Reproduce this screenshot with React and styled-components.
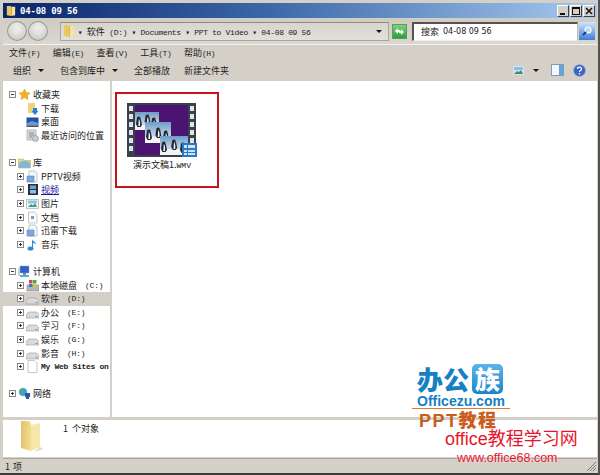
import styled, { createGlobalStyle } from "styled-components";

const GlobalStyle = createGlobalStyle`
  html, body {
    margin: 0;
    padding: 0;
    background: #d4d0c8;
  }
  * {
    box-sizing: border-box;
  }
`;

const CJK = `"Noto Sans CJK SC", "Liberation Sans", sans-serif`;
const MONO = `"Liberation Mono", "Noto Sans CJK SC", monospace`;

const Window = styled.div`
  position: relative;
  width: 600px;
  height: 475px;
  display: flex;
  flex-direction: column;
  padding: 3px 1px 0 3px;
  background: #d4d0c8;
  border-right: 2px solid #55534f;
  border-bottom: 2px solid #3c3b38;
  overflow: hidden;
  font-family: ${CJK};
  font-size: 9px;
  color: #222;
`;

const TitleBar = styled.div`
  height: 15px;
  flex: none;
  display: flex;
  align-items: center;
  gap: 3px;
  padding: 0 2px;
  background: linear-gradient(90deg, #0a246a 0%, #3d68a8 45%, #a6caf0 100%);
`;

const TitleText = styled.span`
  flex: 1;
  font: bold 9px "DejaVu Sans Mono", monospace;
  letter-spacing: -0.2px;
  color: #fff;
`;

const WinButton = styled.div`
  width: 12px;
  height: 12px;
  background: #d4d0c8;
  border: 1px solid;
  border-color: #fff #404040 #404040 #fff;
  display: flex;
  align-items: center;
  justify-content: center;
`;

const WinButtons = styled.div`
  display: flex;
  gap: 1px;
`;

const NavBar = styled.div`
  height: 26px;
  flex: none;
  margin-top: 1px;
  display: flex;
  align-items: center;
  padding: 0 2px 1px 4px;
  background: linear-gradient(#cfccc4, #dad7d0);
  border-bottom: 1px solid #f2f1ee;
`;

const RoundButton = styled.div`
  width: 20px;
  height: 20px;
  margin-right: 1px;
  border-radius: 50%;
  border: 1px solid #999996;
  background: radial-gradient(circle at 50% 35%, #f2f2f0, #cfcfcb 70%, #b4b4b0);
  display: flex;
  align-items: center;
  justify-content: center;
`;

const AddressBar = styled.div`
  width: 331px;
  height: 19px;
  margin-left: 11px;
  display: flex;
  align-items: center;
  padding: 0 6px 0 1px;
  background: linear-gradient(#d8d5ce, #e2e0da);
  border: 1px solid #a9a69f;
  border-top-color: #8f8c85;
`;

const Crumbs = styled.span`
  flex: 1;
  margin-left: 2px;
  white-space: nowrap;
  font: 8px ${MONO};
  letter-spacing: -0.33px;
  color: #222;
`;

const CrumbCjk = styled.span`
  font: 9px ${CJK};
  letter-spacing: 0;
`;

const GoButton = styled.div`
  width: 15px;
  height: 15px;
  margin-left: 3px;
  background: linear-gradient(#7ed27a, #2f9e3a);
  border: 1px solid #5f9a5c;
  display: flex;
  align-items: center;
  justify-content: center;
`;

const SearchBox = styled.div`
  width: 167px;
  height: 19px;
  margin-left: 5px;
  display: flex;
  align-items: center;
  padding-left: 7px;
  gap: 4px;
  background: #fff;
  border-top: 2px solid #55534f;
  border-left: 2px solid #55534f;
  border-right: 1px solid #c0bdb6;
  border-bottom: 1px solid #f0efec;
  font-size: 9px;
`;

const SearchMono = styled.span`
  font: 8px "DejaVu Sans", sans-serif;
`;

const SearchButton = styled.div`
  width: 16px;
  height: 18px;
  margin-left: 1px;
  background: linear-gradient(#d4e4fa, #3d7fd8);
  display: flex;
  align-items: center;
  justify-content: center;
`;

const MenuBar = styled.div`
  height: 17px;
  flex: none;
  display: flex;
  align-items: center;
  gap: 12.5px;
  padding-left: 6px;
  padding-bottom: 2px;
`;

const MenuItem = styled.span`
  font-size: 9px;
  white-space: nowrap;
`;

const MenuKey = styled.span`
  font: 8px ${MONO};
  letter-spacing: -0.4px;
`;

const Toolbar = styled.div`
  height: 18px;
  flex: none;
  display: flex;
  align-items: center;
  padding: 0 11px 2px 10px;
`;

const ToolButton = styled.span`
  display: flex;
  align-items: center;
  gap: 7px;
  margin-right: ${(p) => p.$gap}px;
  font-size: 9px;
  white-space: nowrap;
`;

const Caret = styled.i`
  display: block;
  width: 0;
  height: 0;
  border-left: 3px solid transparent;
  border-right: 3px solid transparent;
  border-top: 3px solid #111;
`;

const ViewCaret = styled(Caret)`
  margin-right: 3px;
`;

const ToolIcons = styled.div`
  margin-left: auto;
  display: flex;
  align-items: center;
  gap: 9px;
`;

const Split = styled.div`
  height: 336px;
  flex: none;
  margin-top: 1px;
  display: flex;
`;

const Sidebar = styled.nav`
  width: 107px;
  flex: none;
  padding-top: 7px;
  background: #fff;
  overflow: hidden;
`;

const Content = styled.main`
  flex: 1;
  margin-left: 2px;
  padding: 11px 0 0 3px;
  background: #fff;
`;

const TreeGroup = styled.div`
  margin-bottom: 13.6px;
`;

const Row = styled.div`
  height: 13.6px;
  display: flex;
  align-items: center;
  padding-left: ${(p) => (p.$child ? 14 : 6)}px;
  background: ${(p) => (p.$selected ? "#d4d0c8" : "transparent")};
  white-space: nowrap;
`;

const Expander = styled.span`
  position: relative;
  width: 7px;
  height: 7px;
  flex: none;
  border: 1px solid #8a8a8a;
  background: #fff;
  &::before {
    content: "";
    position: absolute;
    left: 1px;
    right: 1px;
    top: 2px;
    height: 1px;
    background: #333;
  }
  &::after {
    content: "";
    display: ${(p) => (p.$open ? "none" : "block")};
    position: absolute;
    top: 1px;
    bottom: 1px;
    left: 2px;
    width: 1px;
    background: #333;
  }
`;

const ExpanderGap = styled.span`
  width: 7px;
  flex: none;
`;

const RowIcon = styled.span`
  width: 13px;
  height: 13px;
  flex: none;
  margin: 0 2px 0 2px;
  display: flex;
  align-items: center;
  justify-content: center;
`;

const RowLabel = styled.span`
  font: ${(p) => (p.$mono ? `bold 8px ${MONO}` : `9px ${CJK}`)};
  color: ${(p) => (p.$link ? "#1c1c9c" : "#222")};
  text-decoration: ${(p) => (p.$link ? "underline" : "none")};
  letter-spacing: ${(p) => (p.$mono ? "-0.3px" : "0")};
`;

const Drive = styled.span`
  font: 8px ${MONO};
  margin-left: 8px;
  letter-spacing: -0.2px;
`;

const SelectBox = styled.div`
  width: 104px;
  height: 96px;
  border: 2px solid #c8141e;
  display: flex;
  flex-direction: column;
  align-items: center;
  padding: 9px 10px 0 0;
`;

const FileName = styled.span`
  margin-top: 1px;
  font-size: 9px;
  line-height: 13px;
  color: #222;
  white-space: nowrap;
`;

const FileExt = styled.span`
  font: 8px ${MONO};
`;

const Details = styled.div`
  height: 37px;
  flex: none;
  margin-top: 3px;
  display: flex;
  background: #fff;
  padding-left: 15px;
`;

const DetailsText = styled.span`
  margin-left: 19px;
  padding-top: 2px;
  font-size: 9px;
  word-spacing: 2px;
`;

const StatusBar = styled.div`
  height: 15px;
  flex: none;
  margin-top: 1px;
  display: flex;
  align-items: center;
  padding-left: 2px;
  background: #d4d0c8;
  border-top: 1px solid #a9a69f;
  font-size: 9px;
  word-spacing: 1px;
`;

const Grip = styled.svg`
  position: absolute;
  right: 1px;
  bottom: 1px;
`;

// Site stamp laid over the lower-right corner of the window
const Stamp = styled.div`
  position: absolute;
  left: 412px;
  top: 364px;
  width: 180px;
  pointer-events: none;
`;

const LogoRow = styled.div`
  height: 30px;
  display: flex;
  align-items: center;
  padding-left: 5px;
  gap: 3px;
  font: 900 26px/30px ${CJK};
  color: #1680c4;
`;

const LogoBadge = styled.span`
  width: 31px;
  height: 30px;
  border-radius: 5px;
  background: linear-gradient(#5cb4ea, #1b84cc);
  color: #fff;
  font-size: 25px;
  line-height: 29px;
  text-align: center;
`;

const LogoDomain = styled.div`
  width: 98px;
  height: 15px;
  padding-left: 5px;
  border-bottom: 1px solid #e07a28;
  font: bold 14px/14px "Liberation Sans", sans-serif;
  color: #1680c4;
`;

const LogoCourse = styled.div`
  height: 21px;
  padding: 3px 0 0 7px;
  font: 900 18px/18px "Liberation Sans", ${CJK};
  color: #cc5c1c;
  letter-spacing: 1.5px;
`;

const StampTitle = styled.div`
  position: absolute;
  left: 33px;
  top: 66px;
  font: 18px/18px "Liberation Sans", ${CJK};
  color: #e8142c;
  white-space: nowrap;
  text-shadow: 0 0 2px #fff;
`;

const StampUrl = styled.div`
  position: absolute;
  left: 45px;
  top: 87px;
  font: 12.5px/15px "Liberation Sans", sans-serif;
  color: #e8142c;
  white-space: nowrap;
  text-shadow: 0 0 2px #fff;
`;

const Folder = ({ size = 13 }) => (
  <svg width={size} height={size} viewBox="0 0 13 13">
    <path d="M2 1h4l1 1v10l-5-1z" fill="#e8c860" />
    <path d="M7 2h4v9l-4 1z" fill="#f6e4a0" />
    <path d="M7 2v10" stroke="#caa544" strokeWidth="0.6" />
  </svg>
);

const treeIcons = {
  star: (
    <path
      d="M6.5 1l1.7 3.6 3.8.4-2.8 2.6.8 3.9-3.5-2-3.5 2 .8-3.9L1 5l3.8-.4z"
      fill="#f5b21e"
      stroke="#d98a12"
      strokeWidth="0.5"
    />
  ),
  download: (
    <>
      <path d="M2 1h7v10H2z" fill="#efd477" />
      <path d="M7 6h4v3h1.5L9 13 5.5 9H7z" fill="#2f7fcc" />
    </>
  ),
  desktop: (
    <>
      <rect x="0.5" y="2.5" width="12" height="8" fill="#2450a8" />
      <path d="M1 8l5-2 6 2v2H1z" fill="#6a96dc" />
      <rect x="0.5" y="10.5" width="12" height="1.5" fill="#555" />
    </>
  ),
  recent: (
    <>
      <rect x="1" y="1" width="9" height="10" fill="#d8d8d8" stroke="#999" strokeWidth="0.6" />
      <path d="M3 4h5M3 6h5M3 8h3" stroke="#888" />
      <circle cx="9.5" cy="9.5" r="3" fill="#c4ccd4" stroke="#889" strokeWidth="0.6" />
    </>
  ),
  library: (
    <>
      <path d="M0.5 3h5l1 1.5h6V12H0.5z" fill="#f0d880" stroke="#b89c48" strokeWidth="0.5" />
      <path d="M1 7c3-3 8-3 11 0v5H1z" fill="#7fb8d8" />
    </>
  ),
  doc: (
    <>
      <path d="M3 1h6l2 2v9H3z" fill="#f4f6fa" stroke="#a0a8b4" strokeWidth="0.6" />
      <rect x="1" y="6" width="7" height="6" fill="#7fa8dc" stroke="#4c78b4" strokeWidth="0.5" />
    </>
  ),
  film: (
    <>
      <rect x="2" y="1" width="10" height="11" fill="#2c3038" />
      <rect x="4" y="2.5" width="6" height="3.5" fill="#6aa4d4" />
      <rect x="4" y="7" width="6" height="3.5" fill="#8cc0e4" />
    </>
  ),
  picture: (
    <>
      <rect x="0.5" y="2.5" width="12" height="9" fill="#eef4f6" stroke="#8aa" strokeWidth="0.6" />
      <path d="M2 10l3-3 2 1.5L9 6l2 4z" fill="#3c9c7c" />
      <rect x="2" y="3.5" width="9" height="3" fill="#8cc4e8" />
    </>
  ),
  page: (
    <>
      <path d="M2.5 1h6l2.5 2.5V12H2.5z" fill="#fafafa" stroke="#a4a8b0" strokeWidth="0.6" />
      <rect x="5" y="5" width="3" height="3" fill="#7c9cc4" />
    </>
  ),
  music: (
    <>
      <path d="M6 1.5c1 2 4 2.5 4.5 5C9.5 5.5 8 5 7 5v6H6z" fill="#2f88d8" />
      <ellipse cx="4.5" cy="10.5" rx="3" ry="2" fill="#2f88d8" />
    </>
  ),
  computer: (
    <>
      <rect x="2" y="1" width="9" height="7" fill="#2c62c4" stroke="#8aa" strokeWidth="0.5" />
      <rect x="5" y="8" width="3" height="2" fill="#889" />
      <rect x="2" y="10" width="9" height="2" fill="#50b0d8" />
      <rect x="0" y="3" width="2" height="8" fill="#c8d0d8" />
    </>
  ),
  system: (
    <>
      <rect x="1" y="6" width="12" height="6" fill="#b4b8bc" stroke="#777" strokeWidth="0.5" />
      <path d="M3 1h3.5v3.5H3z" fill="#d84c2c" />
      <path d="M7 1h3.5v3.5H7z" fill="#4ca83c" />
      <path d="M3 5h3.5v3H3z" fill="#2c7cd8" />
      <path d="M7 5h3.5v3H7z" fill="#e8c42c" />
    </>
  ),
  drive: (
    <>
      <path d="M2.5 6h8L13 9v3H0V9z" fill="#d8dadc" stroke="#888" strokeWidth="0.5" />
      <rect x="9.5" y="10" width="2" height="1" fill="#4a8" />
    </>
  ),
  blank: <path d="M2 0.5h6.5L11 3v9.5H2z" fill="#fff" stroke="#b0b0b0" strokeWidth="0.7" />,
  network: (
    <>
      <circle cx="5" cy="5" r="4" fill="#3aa0d0" />
      <path d="M2 3l3 1 1 3-3 0z" fill="#4cb050" />
      <rect x="7" y="6" width="5" height="4" fill="#2456b8" />
      <rect x="8" y="10" width="3" height="2" fill="#456" />
    </>
  ),
};

const TreeIcon = ({ name }) => (
  <RowIcon>
    <svg width="13" height="13" viewBox="0 0 13 13">
      {treeIcons[name]}
    </svg>
  </RowIcon>
);

const TreeRow = ({ icon, label, drive, child, open, noToggle, selected, link, mono }) => (
  <Row $child={child} $selected={selected}>
    {noToggle ? <ExpanderGap /> : <Expander $open={open} />}
    <TreeIcon name={icon} />
    <RowLabel $link={link} $mono={mono}>
      {label}
    </RowLabel>
    {drive && <Drive>{drive}</Drive>}
  </Row>
);

const Penguin = ({ x, y }) => (
  <g transform={`translate(${x} ${y})`}>
    <path d="M1 1.5c1-1.5 3-1.5 3.5 0L6 9 4.5 11H1.5L0 8z" fill="#202838" />
    <path d="M2.8 3c1 1 1.7 4 1.2 7H2.3z" fill="#f6f6f4" />
    <path d="M4 1.5l1.8.6-1.6.6z" fill="#d8a030" />
  </g>
);

const Photo = ({ x, y, w, h }) => (
  <g>
    <rect x={x} y={y} width={w} height={h} fill="url(#sky)" />
    <path d={`M${x} ${y + h * 0.7}h${w}v${h * 0.3}h${-w}z`} fill="#f2f4f6" />
    <Penguin x={x + 1} y={y + h - 14} />
    <Penguin x={x + w * 0.4} y={y + h - 16} />
    <Penguin x={x + w - 8} y={y + h - 13} />
  </g>
);

// Video thumbnail: a film strip with three penguin frames and the media badge
const VideoThumb = () => (
  <svg width="70" height="54" viewBox="0 0 70 54">
    <defs>
      <linearGradient id="sky" x1="0" y1="0" x2="0" y2="1">
        <stop offset="0" stopColor="#6f9cc8" />
        <stop offset="0.7" stopColor="#c8dcec" />
        <stop offset="1" stopColor="#ffffff" />
      </linearGradient>
    </defs>
    <rect x="0" y="0" width="69" height="54" fill="#39414a" />
    <rect x="8" y="2" width="53" height="50" fill="#4a1470" />
    {[3, 11, 19, 27, 35, 43].map((y) => (
      <g key={y}>
        <rect x="2" y={y} width="4" height="5" fill="#dfe4e8" />
        <rect x="63" y={y} width="4" height="5" fill="#dfe4e8" />
      </g>
    ))}
    <Photo x={8} y={9} w={24} h={18} />
    <Photo x={18} y={19} w={26} h={21} />
    <Photo x={33} y={33} w={28} h={19} />
    <rect x="55" y="40" width="15" height="14" fill="#2a78c8" />
    <rect x="57" y="42" width="3" height="3" fill="#cfe4f8" />
    <rect x="61" y="42" width="7" height="3" fill="#cfe4f8" />
    <rect x="57" y="47" width="3" height="2" fill="#cfe4f8" />
    <rect x="61" y="47" width="7" height="2" fill="#cfe4f8" />
    <rect x="57" y="50" width="3" height="2" fill="#cfe4f8" />
    <rect x="61" y="50" width="7" height="2" fill="#cfe4f8" />
  </svg>
);

const NavArrow = ({ right }) => (
  <svg width="12" height="12" viewBox="0 0 12 12">
    <path
      d={right ? "M2 6h7M6 3l3 3-3 3" : "M10 6H3M6 3L3 6l3 3"}
      fill="none"
      stroke="#e6e6e4"
      strokeWidth="1.5"
    />
  </svg>
);

const App = () => (
  <>
    <GlobalStyle />
    <Window>
      <TitleBar>
        <Folder size={12} />
        <TitleText>04-08 09 56</TitleText>
        <WinButtons>
          <WinButton>
            <svg width="8" height="8" viewBox="0 0 8 8">
              <rect x="1" y="6" width="5" height="2" fill="#111" />
            </svg>
          </WinButton>
          <WinButton>
            <svg width="8" height="8" viewBox="0 0 8 8">
              <rect x="0.5" y="0.5" width="7" height="7" fill="none" stroke="#111" />
              <rect x="0" y="0" width="8" height="2" fill="#111" />
            </svg>
          </WinButton>
          <WinButton>
            <svg width="8" height="8" viewBox="0 0 8 8">
              <path d="M1 1l6 6M7 1L1 7" stroke="#111" strokeWidth="1.5" />
            </svg>
          </WinButton>
        </WinButtons>
      </TitleBar>

      <NavBar>
        <RoundButton>
          <NavArrow />
        </RoundButton>
        <RoundButton>
          <NavArrow right />
        </RoundButton>
        <AddressBar>
          <Folder size={14} />
          <Crumbs>
            ▾ <CrumbCjk>软件</CrumbCjk> (D:) ▾ Documents ▾ PPT to Video ▾ 04-08 09 56
          </Crumbs>
          <Caret />
        </AddressBar>
        <GoButton>
          <svg width="11" height="9" viewBox="0 0 11 9">
            <path d="M1 4l3-3v2h2v2H4v2zM10 5L7 8V6H5V4h2V2z" fill="#fff" />
          </svg>
        </GoButton>
        <SearchBox>
          搜索 <SearchMono>04-08 09 56</SearchMono>
        </SearchBox>
        <SearchButton>
          <svg width="12" height="12" viewBox="0 0 12 12">
            <circle cx="7" cy="5" r="3" fill="#bcd8f8" stroke="#fff" strokeWidth="1.2" />
            <path d="M5 7l-3 3" stroke="#123c8c" strokeWidth="2" />
          </svg>
        </SearchButton>
      </NavBar>

      <MenuBar>
        <MenuItem>文件<MenuKey>(F)</MenuKey></MenuItem>
        <MenuItem>编辑<MenuKey>(E)</MenuKey></MenuItem>
        <MenuItem>查看<MenuKey>(V)</MenuKey></MenuItem>
        <MenuItem>工具<MenuKey>(T)</MenuKey></MenuItem>
        <MenuItem>帮助<MenuKey>(H)</MenuKey></MenuItem>
      </MenuBar>

      <Toolbar>
        <ToolButton $gap={16}>
          组织 <Caret />
        </ToolButton>
        <ToolButton $gap={16}>
          包含到库中 <Caret />
        </ToolButton>
        <ToolButton $gap={14}>全部播放</ToolButton>
        <ToolButton $gap={0}>新建文件夹</ToolButton>
        <ToolIcons>
          <svg width="11" height="9" viewBox="0 0 11 9">
            <rect width="11" height="9" fill="#d8e4ec" />
            <path d="M1 8l3-3 2 1 2-2 2 4z" fill="#3c8c7c" />
            <rect x="1" y="1" width="9" height="3" fill="#8cc0e0" />
          </svg>
          <ViewCaret />
          <svg width="13" height="12" viewBox="0 0 13 12">
            <rect x="0.5" y="0.5" width="12" height="11" fill="#f4f8fc" stroke="#7c9cb8" />
            <rect x="8" y="1" width="4" height="10" fill="#5ca8dc" />
          </svg>
          <svg width="13" height="13" viewBox="0 0 13 13">
            <circle cx="6.5" cy="6.5" r="6" fill="#3a66c0" stroke="#9cb0dc" strokeWidth="0.8" />
            <path d="M4.5 5c0-2.5 4-2.5 4 0 0 1.5-2 1.5-2 3" fill="none" stroke="#fff" strokeWidth="1.3" />
            <rect x="5.8" y="9" width="1.4" height="1.4" fill="#fff" />
          </svg>
        </ToolIcons>
      </Toolbar>

      <Split>
        <Sidebar>
          <TreeGroup>
            <TreeRow open icon="star" label="收藏夹" />
            <TreeRow child noToggle icon="download" label="下载" />
            <TreeRow child noToggle icon="desktop" label="桌面" />
            <TreeRow child noToggle icon="recent" label="最近访问的位置" />
          </TreeGroup>
          <TreeGroup>
            <TreeRow open icon="library" label="库" />
            <TreeRow child icon="doc" label="PPTV视频" />
            <TreeRow child icon="film" label="视频" link />
            <TreeRow child icon="picture" label="图片" />
            <TreeRow child icon="page" label="文档" />
            <TreeRow child icon="doc" label="迅雷下载" />
            <TreeRow child icon="music" label="音乐" />
          </TreeGroup>
          <TreeGroup>
            <TreeRow open icon="computer" label="计算机" />
            <TreeRow child icon="system" label="本地磁盘" drive="(C:)" />
            <TreeRow child selected icon="drive" label="软件" drive="(D:)" />
            <TreeRow child icon="drive" label="办公" drive="(E:)" />
            <TreeRow child icon="drive" label="学习" drive="(F:)" />
            <TreeRow child icon="drive" label="娱乐" drive="(G:)" />
            <TreeRow child icon="drive" label="影音" drive="(H:)" />
            <TreeRow child icon="blank" label="My Web Sites on" mono />
          </TreeGroup>
          <TreeRow icon="network" label="网络" />
        </Sidebar>

        <Content>
          <SelectBox>
            <VideoThumb />
            <FileName>
              演示文稿1.<FileExt>WMV</FileExt>
            </FileName>
          </SelectBox>
        </Content>
      </Split>

      <Details>
        <svg width="26" height="34" viewBox="0 0 26 34">
          <defs>
            <linearGradient id="folderBack" x1="0" y1="0" x2="1" y2="0">
              <stop offset="0" stopColor="#e4c46c" />
              <stop offset="1" stopColor="#f4dc94" />
            </linearGradient>
          </defs>
          <path d="M3 1h8l2 2v28l-10-3z" fill="url(#folderBack)" />
          <path d="M13 5l9-2v24l-9 4z" fill="#f6e6a8" />
          <path d="M22 27l3 2-9 3z" fill="#d8d8d4" />
        </svg>
        <DetailsText>1 个对象</DetailsText>
      </Details>

      <StatusBar>1 项</StatusBar>
      <Grip width="11" height="11" viewBox="0 0 11 11">
        <path d="M10 1L1 10M10 4l-6 6M10 7l-3 3" stroke="#807c74" strokeWidth="1" />
      </Grip>

      <Stamp>
        <LogoRow>
          办公
          <LogoBadge>族</LogoBadge>
        </LogoRow>
        <LogoDomain>Officezu.com</LogoDomain>
        <LogoCourse>PPT教程</LogoCourse>
        <StampTitle>office教程学习网</StampTitle>
        <StampUrl>www.office68.com</StampUrl>
      </Stamp>
    </Window>
  </>
);

export default App;
